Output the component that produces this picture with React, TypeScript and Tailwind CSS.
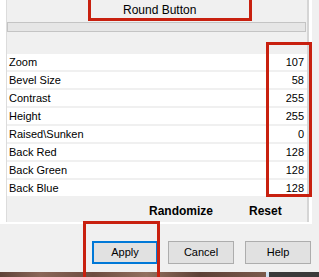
const rows: [string, number][] = [
  ['Zoom', 107],
  ['Bevel Size', 58],
  ['Contrast', 255],
  ['Height', 255],
  ['Raised\\Sunken', 0],
  ['Back Red', 128],
  ['Back Green', 128],
  ['Back Blue', 128],
];

const Button = ({ label, focused }: { label: string; focused?: boolean }) => (
  <div
    className={
      focused
        ? 'w-[66px] h-[23px] flex items-center justify-center bg-[#e1e1e1] border-2 border-[#0078d7] text-[11px]'
        : 'w-[66px] h-[23px] flex items-center justify-center bg-[#e1e1e1] border border-[#adadad] text-[11px]'
    }
  >
    {label}
  </div>
);

export default function App() {
  return (
    <div className="relative w-[319px] h-[277px] overflow-hidden bg-[#f0f0f0] font-['Liberation_Sans',Arial,sans-serif] text-black">
      {/* settings panel */}
      <div className="flex h-[222px]">
        <div className="w-[7px] bg-white border-r border-[#dcdcdc]" />
        <div className="w-[300px] flex flex-col">
          <div className="h-[22px] pl-[116px] text-[12px] leading-[20px]">Round Button</div>
          <div className="h-[10px] mr-[1px] bg-[#e6e6e6] border border-[#c4c4c4]" />
          <div className="h-[22px]" />
          <div className="flex flex-col gap-[2px]">
            {rows.map(([label, value]) => (
              <div
                key={label}
                className="h-[16px] bg-white flex items-center justify-between pl-[2px] pr-[3px] text-[11px] leading-[16px]"
              >
                <span>{label}</span>
                <span>{value}</span>
              </div>
            ))}
          </div>
          <div className="mt-[7px] flex text-[12px] font-bold leading-[16px]">
            <span className="ml-[142px] w-[100px]">Randomize</span>
            <span>Reset</span>
          </div>
        </div>
        <div className="w-[2px] bg-[#d5d5d5]" />
        <div className="w-[3px] bg-white" />
      </div>
      <div className="w-[312px] h-[2px] bg-white" />

      {/* dialog buttons */}
      <div className="h-[48px] pt-[17px] flex">
        <div className="ml-[92px]">
          <Button label="Apply" focused />
        </div>
        <div className="ml-[10px]">
          <Button label="Cancel" />
        </div>
        <div className="ml-[11px]">
          <Button label="Help" />
        </div>
      </div>

      {/* desktop behind the dialog */}
      <div className="h-[5px] flex">
        <div className="w-[266px] bg-[linear-gradient(90deg,#5e4238,#8a6658_15%,#6d4c40_35%,#93705f_55%,#5c4036_75%,#7a5a4c)]" />
        <div className="w-[3px] bg-[#cfe3f2]" />
        <div className="flex-1 bg-[#3a3a3a]" />
      </div>

      {/* annotation boxes */}
      <div className="absolute left-[88px] top-[-3px] w-[164px] h-[24px] border-[3px] border-[#c8200f]" />
      <div className="absolute left-[266px] top-[42px] w-[46px] h-[155px] border-[3px] border-[#c8200f]" />
      <div className="absolute left-[83px] top-[221px] w-[77px] h-[60px] border-[3px] border-[#c8200f]" />
    </div>
  );
}
